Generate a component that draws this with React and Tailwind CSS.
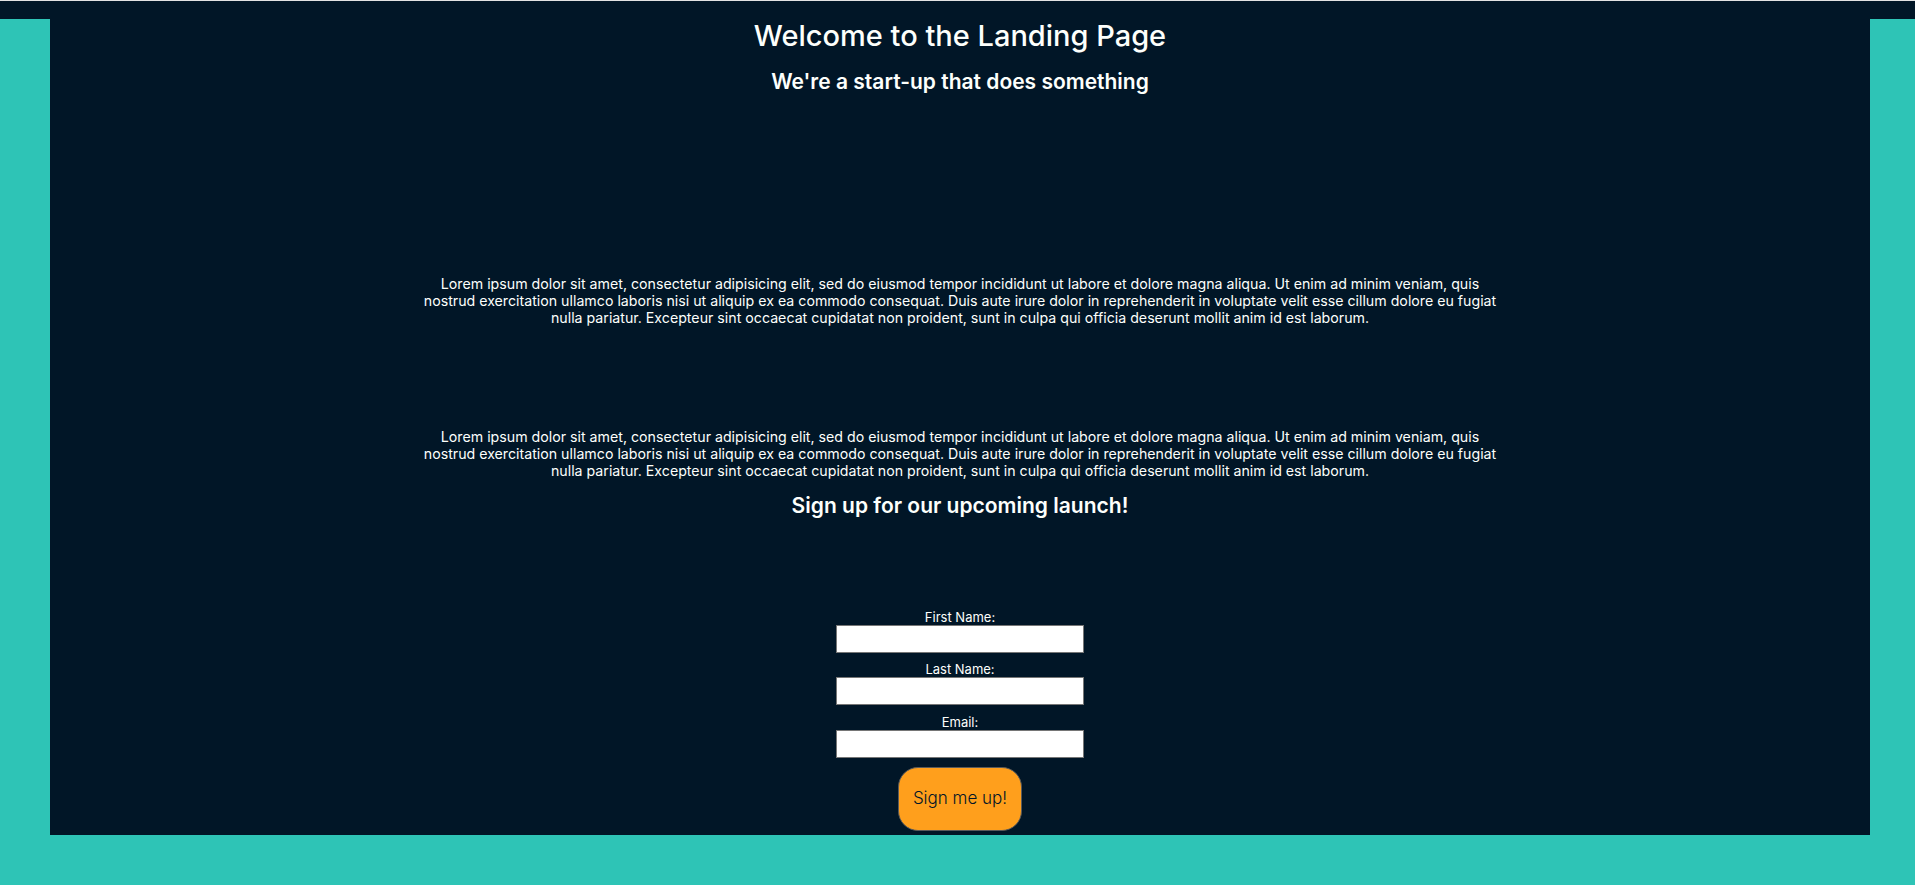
export default function App() {
  const font = { fontFamily: 'Inter, "Noto Sans", sans-serif' };
  const lorem = [
    "Lorem ipsum dolor sit amet, consectetur adipisicing elit, sed do eiusmod tempor incididunt ut labore et dolore magna aliqua. Ut enim ad minim veniam, quis",
    "nostrud exercitation ullamco laboris nisi ut aliquip ex ea commodo consequat. Duis aute irure dolor in reprehenderit in voluptate velit esse cillum dolore eu fugiat",
    "nulla pariatur. Excepteur sint occaecat cupidatat non proident, sunt in culpa qui officia deserunt mollit anim id est laborum.",
  ];
  const Para = ({ className }) => (
    <p className={"text-[14.2px] leading-[17px] text-center text-[#FDFFFC] " + className}>
      {lorem.map((l, i) => (
        <span key={i} className="block whitespace-nowrap">{l}</span>
      ))}
    </p>
  );
  return (
    <div className="min-h-screen bg-[#2EC4B6] flex flex-col" style={font}>
      <div className="h-px bg-[#e3e3e3]" />
      <div className="h-[18px] bg-[#011627]" />
      <div className="pl-[50px] pr-[45px] pb-[50px]">
        <main className="bg-[#011627] h-[816px] flex flex-col items-center text-[#FDFFFC]">
          <h1 className="text-[29px] leading-[34px] font-medium">Welcome to the Landing Page</h1>
          <h2 className="mt-[16px] text-[21px] leading-[26px] font-semibold">We're a start-up that does something</h2>
          <Para className="mt-[180px]" />
          <Para className="mt-[102px]" />
          <h2 className="mt-[14px] text-[21px] leading-[26px] font-semibold">Sign up for our upcoming launch!</h2>
          <form className="mt-[90px] flex flex-col items-center" onSubmit={(e) => e.preventDefault()}>
            <label className="text-[13px] leading-[16px]">First Name:</label>
            <input className="w-[248px] h-[28px] bg-white border border-[#767676] text-black" />
            <label className="mt-[8px] text-[13px] leading-[16px]">Last Name:</label>
            <input className="w-[248px] h-[28px] bg-white border border-[#767676] text-black" />
            <label className="mt-[9px] text-[13px] leading-[16px]">Email:</label>
            <input className="w-[248px] h-[28px] bg-white border border-[#767676] text-black" />
            <button className="mt-[9px] w-[124px] h-[64px] rounded-[20px] bg-[#FF9F1C] border border-[#5a5a5a] text-[#011627] text-[17px] font-light">
              Sign me up!
            </button>
          </form>
        </main>
      </div>
    </div>
  );
}
